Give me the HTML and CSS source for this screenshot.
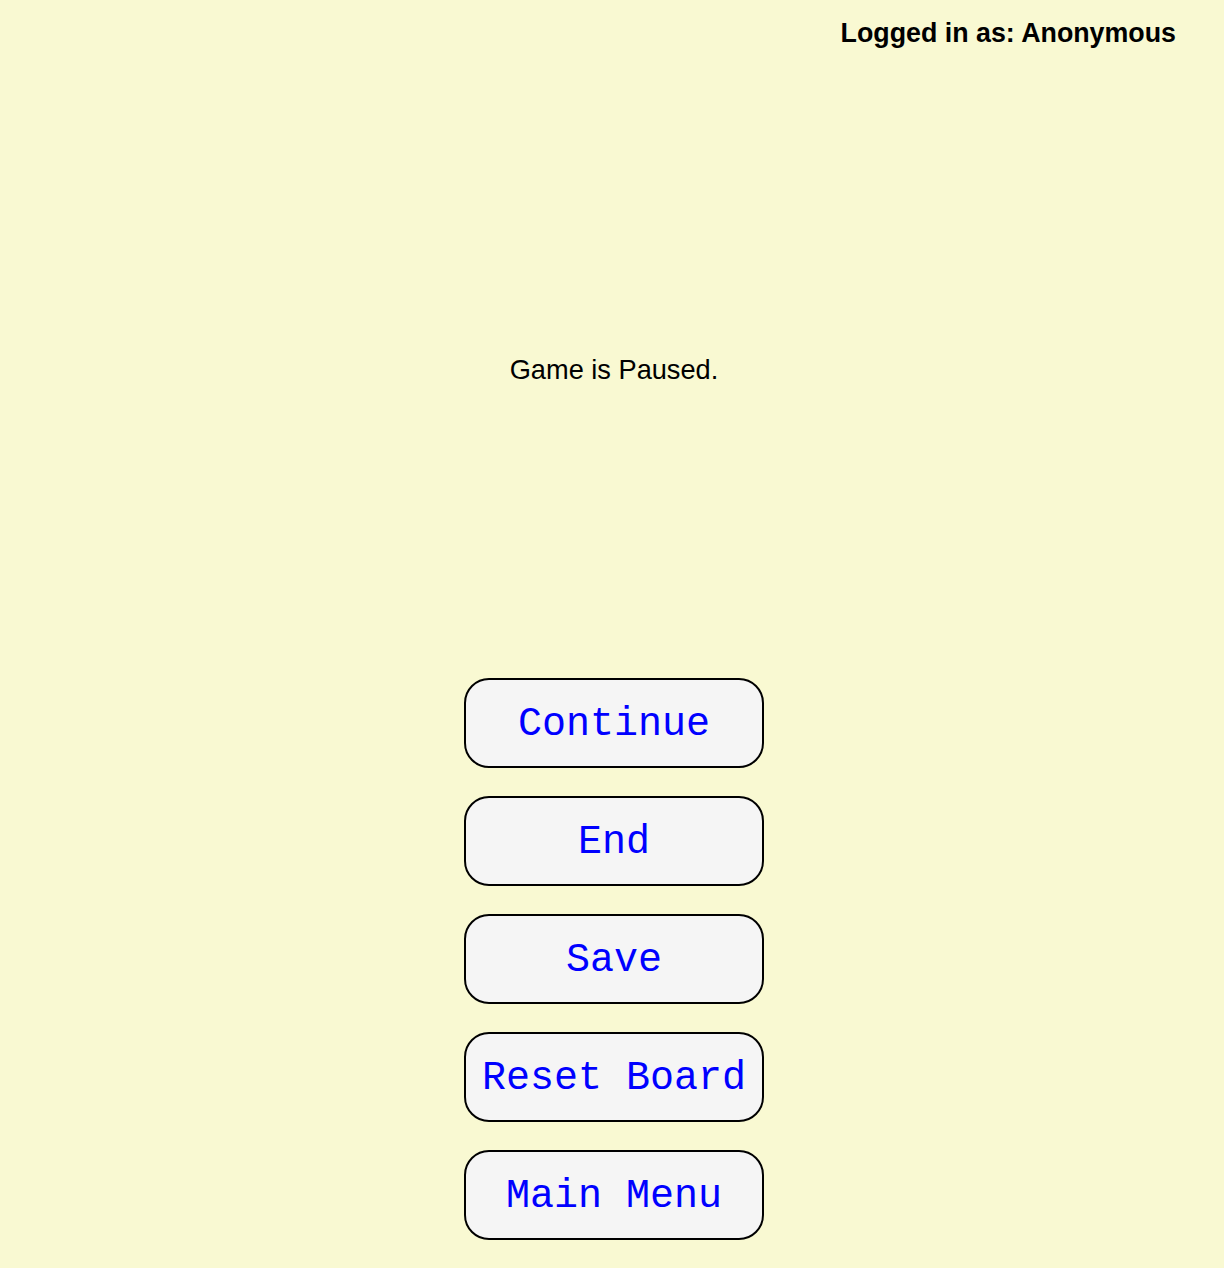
FILE: index.html
```html
<!DOCTYPE html>
<html>
<head>
<meta charset="utf-8">
<title>Game is Paused</title>
<link rel="stylesheet" href="styles.css">
</head>
<body>
<header class="topbar">
  <span class="login">Logged in as: Anonymous</span>
</header>
<main class="pause">
  <p class="status">Game is Paused.</p>
  <nav class="menu">
    <button class="menu-btn">Continue</button>
    <button class="menu-btn">End</button>
    <button class="menu-btn">Save</button>
    <button class="menu-btn">Reset Board</button>
    <button class="menu-btn">Main Menu</button>
  </nav>
</main>
</body>
</html>
```
FILE: styles.css
```css
html, body {
  margin: 0;
  padding: 0;
}
body {
  background: #f9f9d2;
  font-family: "Liberation Sans", Arial, sans-serif;
  color: #000;
  min-height: 1268px;
}
.topbar {
  display: flex;
  justify-content: flex-end;
  padding: 18px 48px 0 0;
}
.login {
  font-size: 26.8px;
  font-weight: bold;
  line-height: 30px;
}
.pause {
  display: flex;
  flex-direction: column;
  align-items: center;
  padding-left: 4px;
}
.status {
  margin: 307px 0 0 0;
  font-size: 27.2px;
  line-height: 30px;
}
.menu {
  display: flex;
  flex-direction: column;
  gap: 28px;
  margin-top: 293px;
}
.menu-btn {
  box-sizing: border-box;
  width: 300px;
  height: 90px;
  border: 2px solid #000;
  border-radius: 25px;
  background: #f5f5f5;
  color: #0000ff;
  font-family: "Courier New", "Nimbus Mono PS", "FreeMono", "Liberation Mono", monospace;
  font-size: 40px;
  padding: 2px 0 0 0;
  display: flex;
  align-items: center;
  justify-content: center;
}
```
